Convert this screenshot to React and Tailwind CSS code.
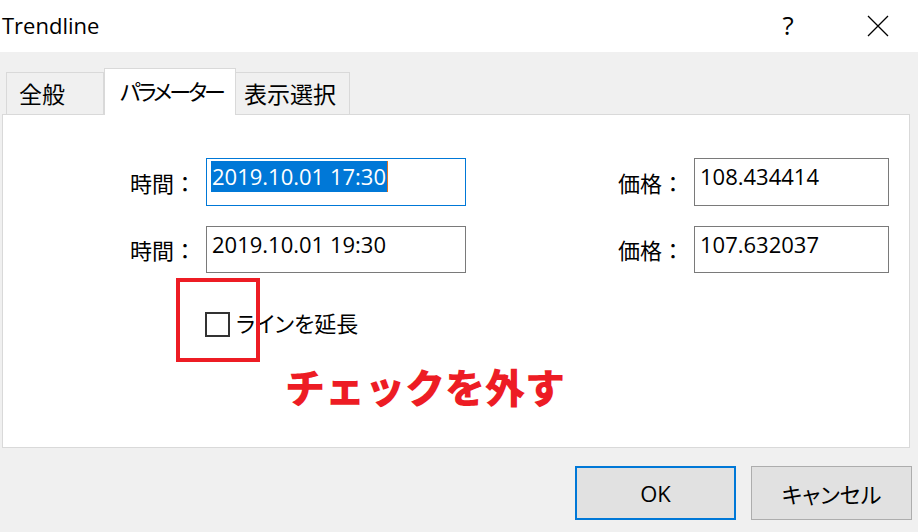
export default function App() {
  const font = { fontFamily: "'Noto Sans CJK JP', 'Noto Sans', sans-serif" };
  return (
    <div className="w-[918px] h-[532px] bg-[#f0f0f0] flex flex-col overflow-hidden text-black" style={font}>
      {/* Title bar */}
      <div className="h-[52px] bg-white flex items-center shrink-0">
        <div className="pl-[2px] pb-[3px] text-[22px] leading-none" style={{ fontFamily: "'Open Sans', sans-serif" }}>Trendline</div>
        <div className="ml-auto flex items-center">
          <div className="w-[40px] text-center text-[26px] leading-none pb-[3px]" style={{ fontFamily: "'Open Sans', sans-serif" }}>?</div>
          <div className="w-[30px]" />
          <div className="w-[80px] flex justify-center">
            <svg width="22" height="22" viewBox="0 0 22 22">
              <path d="M1 1 L21 21 M21 1 L1 21" stroke="#000" strokeWidth="1.3" fill="none" />
            </svg>
          </div>
        </div>
      </div>

      {/* Tabs */}
      <div className="h-[62px] px-[6px] flex items-end shrink-0 relative z-10">
        <div className="w-[98px] h-[42px] bg-[#f0f0f0] border border-b-0 border-[#d9d9d9] flex items-center pl-[12px] text-[23px] whitespace-nowrap">全般</div>
        <div className="w-[132px] h-[47px] -mb-px bg-white border border-b-0 border-[#d9d9d9] flex items-center pl-[15px] text-[22px] tracking-[-3px] pb-[4px] whitespace-nowrap overflow-hidden [font-feature-settings:'palt']">パラメーター</div>
        <div className="w-[114px] h-[42px] bg-[#f0f0f0] border border-b-0 border-l-0 border-[#d9d9d9] flex items-center pl-[8px] text-[23px] whitespace-nowrap">表示選択</div>
      </div>

      {/* Panel */}
      <div className="mx-[2px] w-[908px] h-[334px] bg-white border border-[#d9d9d9] shrink-0 pt-[43px] relative">
        <div className="flex items-center h-[48px]">
          <div className="w-[193px] text-right text-[22px]">時間：</div>
          <div className="ml-[10px] w-[260px] h-[48px] border border-[#0078d7] flex items-start pt-[2px] pl-[4px]">
            <span className="bg-[#0078d7] text-white text-[22px] leading-[31px] px-[1px]" style={{ fontFamily: "'Open Sans', sans-serif" }}>2019.10.01 17:30</span>
            <span className="w-px h-[31px] bg-[#e07020]" />
          </div>
          <div className="w-[218px] text-right text-[22px]">価格：</div>
          <div className="ml-[10px] w-[195px] h-[48px] border border-[#7a7a7a] pl-[5px] pt-[2px] text-[22px] leading-[31px]" style={{ fontFamily: "'Open Sans', sans-serif" }}>108.434414</div>
        </div>
        <div className="flex items-center h-[47px] mt-[20px]">
          <div className="w-[193px] text-right text-[22px]">時間：</div>
          <div className="ml-[10px] w-[260px] h-[47px] border border-[#7a7a7a] pl-[5px] pt-[2px] text-[22px] leading-[31px]" style={{ fontFamily: "'Open Sans', sans-serif" }}>2019.10.01 19:30</div>
          <div className="w-[218px] text-right text-[22px]">価格：</div>
          <div className="ml-[10px] w-[195px] h-[47px] border border-[#7a7a7a] pl-[5px] pt-[2px] text-[22px] leading-[31px]" style={{ fontFamily: "'Open Sans', sans-serif" }}>107.632037</div>
        </div>

        <div className="flex items-center mt-[33px] pl-[202px]">
          <div className="relative">
            <div className="w-[25px] h-[25px] border-2 border-[#333]" />
            <div className="absolute left-[-29px] top-[-34px] w-[84px] h-[84px] border-4 border-[#ed1c24]" />
          </div>
          <div className="ml-[6px] text-[22px] pb-[3px] [font-feature-settings:'palt']">ラインを延長</div>
        </div>

        <div className="pl-[282px] mt-[20px] text-[40px] leading-[48px] font-black text-[#ed1c24]">チェックを外す</div>
      </div>

      {/* Buttons */}
      <div className="flex justify-end gap-[15px] pr-[6px] pt-[18px]">
        <button className="w-[161px] h-[54px] bg-[#e1e1e1] border-2 border-[#0078d7] text-[22px]" style={{ fontFamily: "'Open Sans', sans-serif" }}>OK</button>
        <button className="w-[161px] h-[54px] bg-[#e1e1e1] border border-[#adadad] text-[22px] [font-feature-settings:'palt']">キャンセル</button>
      </div>
    </div>
  );
}
